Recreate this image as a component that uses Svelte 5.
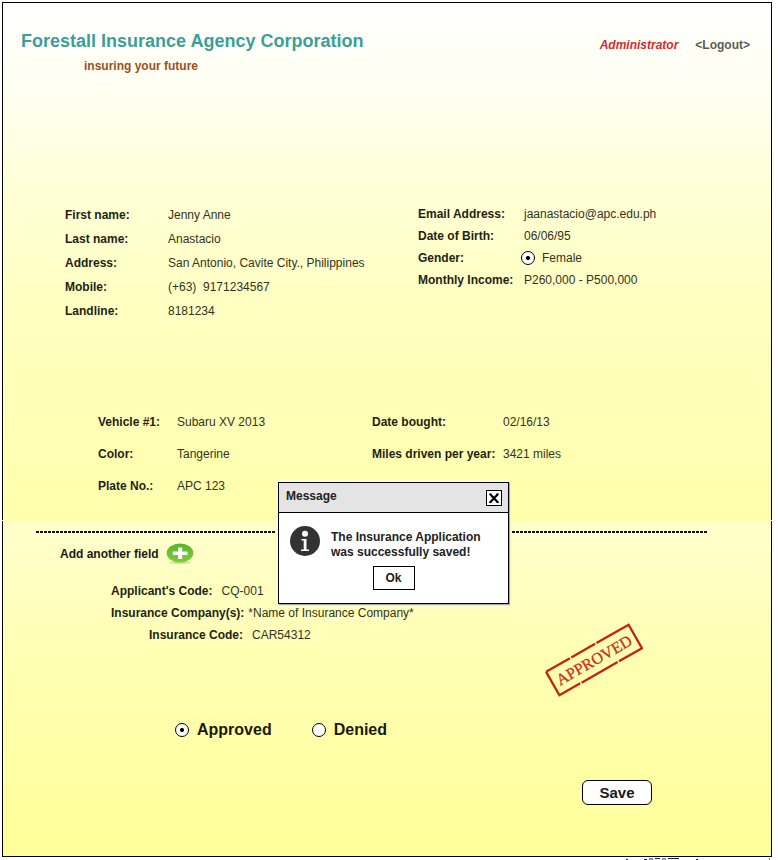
<script>
  let decision = $state('approved');
  let gender = $state('female');
  let open = $state(true);

  const person = [
    ['First name:', 'Jenny Anne'],
    ['Last name:', 'Anastacio'],
    ['Address:', 'San Antonio, Cavite City., Philippines'],
    ['Mobile:', '(+63)\u00a0 9171234567'],
    ['Landline:', '8181234']
  ];
  const vehicle = [
    ['Vehicle #1:', 'Subaru XV 2013'],
    ['Color:', 'Tangerine'],
    ['Plate No.:', 'APC 123']
  ];
  const usage = [
    ['Date bought:', '02/16/13'],
    ['Miles driven per year:', '3421 miles']
  ];
</script>

{#snippet rows(list)}
  {#each list as [name, value]}
    <div class="row"><dt>{name}</dt><dd>{value}</dd></div>
  {/each}
{/snippet}

<main class="frame">
  <section class="details">
    <header>
      <div>
        <h1>Forestall Insurance Agency Corporation</h1>
        <p class="tagline">insuring your future</p>
      </div>
      <nav>
        <span class="role">Administrator</span>
        <a href="#logout">&lt;Logout&gt;</a>
      </nav>
    </header>

    <div class="person">
      <dl>{@render rows(person)}</dl>
      <dl class="contact">
        <div class="row"><dt>Email Address:</dt><dd>jaanastacio@apc.edu.ph</dd></div>
        <div class="row"><dt>Date of Birth:</dt><dd>06/06/95</dd></div>
        <div class="row">
          <dt>Gender:</dt>
          <dd>
            <label class="gender">
              <input type="radio" name="gender" value="female" bind:group={gender} />Female
            </label>
          </dd>
        </div>
        <div class="row"><dt>Monthly Income:</dt><dd>P260,000 - P500,000</dd></div>
      </dl>
    </div>

    <div class="vehicle">
      <dl>{@render rows(vehicle)}</dl>
      <dl class="usage">{@render rows(usage)}</dl>
    </div>
  </section>

  <section class="application">
    <hr />
    <button class="add">
      Add another field
      <svg width="28" height="22" viewBox="0 0 28 22" aria-hidden="true">
        <defs>
          <linearGradient id="leaf" x1="0" y1="0" x2="0" y2="1">
            <stop offset="0" stop-color="#58b32b" />
            <stop offset="1" stop-color="#83cc3c" />
          </linearGradient>
        </defs>
        <ellipse cx="14" cy="19.5" rx="11" ry="1.5" fill="#d0e09c" />
        <ellipse cx="14" cy="10" rx="13.3" ry="9.6" fill="url(#leaf)" />
        <path d="M12.200 4.500h4v4h5.300v3.500h-5.300v4h-4v-4H6.700V8.500h5.500z" fill="#fff" />
      </svg>
    </button>

    <div class="result">
      <dl class="codes">
        <div class="row"><dt>Applicant's Code:</dt><dd>CQ-001</dd></div>
        <div class="row company"><dt>Insurance Company(s):</dt><dd>*Name of Insurance Company*</dd></div>
        <div class="row indent"><dt>Insurance Code:</dt><dd>CAR54312</dd></div>
      </dl>
      <svg class="stamp" width="98" height="74" viewBox="0 0 98 74" role="img" aria-label="Approved stamp">
        <g transform="rotate(-29.7 49 37)" fill="none" stroke="#c8200e">
          <path d="M1.500 23.500H29M30.500 23.500H58M59.500 23.500H96.500V50.500H70M68.500 50.500H27M25.500 50.500H1.500V23.500" stroke-width="2.300" />
          <text x="49" y="42.500" text-anchor="middle" fill="#c8301c" stroke="#c8301c" stroke-width="0.300">APPROVED</text>
        </g>
      </svg>
    </div>

    <div class="decision">
      <label><input type="radio" name="decision" value="approved" bind:group={decision} />Approved</label>
      <label><input type="radio" name="decision" value="denied" bind:group={decision} />Denied</label>
    </div>

    <div class="actions"><button class="save">Save</button></div>
  </section>

  {#if open}
    <div class="dialog" role="dialog" aria-labelledby="message-title">
      <div class="bar">
        <h2 id="message-title">Message</h2>
        <button class="close" aria-label="Close" onclick={() => (open = false)}>
          <svg width="12" height="12" viewBox="0 0 12 12" aria-hidden="true">
            <path d="M2 2L10 10.500M10 2L2 10.500" stroke="#000" stroke-width="2.200" />
            <path d="M1 2h2.500M8.500 2H11M1 10.500h2.500M8.500 10.500H11" stroke="#000" stroke-width="0.800" />
          </svg>
        </button>
      </div>
      <div class="body">
        <svg width="30" height="30" viewBox="0 0 30 30" aria-hidden="true">
          <circle cx="15" cy="15" r="15" fill="#333" />
          <circle cx="15" cy="7.800" r="3" fill="#fff" />
          <path d="M11.500 13h5v10.500h2.500v1.500h-8v-1.500h2.700V14.500h-2.200z" fill="#fff" />
        </svg>
        <p>The Insurance Application<br />was successfully saved!</p>
      </div>
      <button class="ok" onclick={() => (open = false)}>Ok</button>
    </div>
  {/if}
</main>
<svg class="edge" width="146" height="2" viewBox="0 0 146 2" aria-hidden="true">
  <path d="M0 1.500h2M18 1.500h3M23 1h4M29 .5h5M36 1h4M42 .5h11M70 1.500h2M143 1h1" stroke="#222" />
</svg>

<style>
  :global(body) {
    margin: 0;
    background: #fff;
  }
  .frame {
    position: relative;
    box-sizing: border-box;
    margin: 2px 6px 0 2px;
    border: 1px solid #000;
    font: 12px/16px 'Liberation Sans', Arial, sans-serif;
    color: #33331c;
  }
  .edge {
    display: block;
    margin: 1px 6px 0 auto;
  }
  h1, h2, p, dl, dd {
    margin: 0;
  }
  button {
    font: inherit;
    font-weight: bold;
    color: #1a1a14;
    padding: 0;
    cursor: pointer;
  }
  .details {
    padding-bottom: 19px;
    background: linear-gradient(#fff, #fffff2 17%, #ffffd4 38%, #ffffc0 60%, #ffffad);
  }
  header {
    display: flex;
    justify-content: space-between;
    padding: 28px 21px 0 18px;
  }
  h1 {
    font-size: 18px;
    line-height: 20px;
    color: #3a9f99;
  }
  .tagline {
    margin-top: 7px;
    padding-left: 63px;
    font-weight: bold;
    color: #9c4f22;
  }
  nav {
    display: flex;
    gap: 17px;
    margin-top: 6px;
    font-weight: bold;
  }
  .role {
    font-style: italic;
    color: #d92a2a;
  }
  nav a {
    color: #5c5c54;
    text-decoration: none;
  }
  .row {
    display: flex;
    align-items: center;
    white-space: nowrap;
  }
  dt {
    flex: none;
    font-weight: bold;
    color: #1f1f12;
  }
  .person {
    display: grid;
    grid-template-columns: 1fr 1fr;
    margin-top: 129px;
    padding-left: 62px;
  }
  .person .row {
    height: 24px;
  }
  .person dt {
    width: 103px;
  }
  .person .contact .row {
    height: 22px;
  }
  .contact dt {
    width: 106px;
  }
  .vehicle {
    display: grid;
    grid-template-columns: 1fr 1fr;
    margin-top: 83px;
    padding: 0 125px 0 95px;
  }
  .vehicle .row {
    height: 32px;
  }
  .vehicle dt {
    width: 79px;
  }
  .vehicle .usage dt {
    width: 131px;
  }
  input[type='radio'] {
    appearance: none;
    box-sizing: border-box;
    width: 14px;
    height: 14px;
    margin: 0;
    border: 1px solid #000;
    border-radius: 50%;
    background: #fff;
  }
  input[type='radio']:checked {
    background: radial-gradient(circle, #000 0 1.6px, #fff 2.4px);
  }
  label {
    display: flex;
    align-items: center;
  }
  .gender {
    gap: 7px;
    margin-left: -3px;
  }
  .application {
    position: relative;
    padding: 10px 0 51px;
    background: linear-gradient(#ffffcc, #ffffb4 40%, #ffff99);
  }
  .application::before {
    content: '';
    position: absolute;
    top: -1px;
    left: -1px;
    right: -1px;
    height: 1px;
    border: solid #fff;
    border-width: 0 1px;
  }
  hr {
    height: 2px;
    margin: 0 64px 0 33px;
    border: 0;
    background: repeating-linear-gradient(90deg, #111 0 3px, transparent 3px 4px);
  }
  .add {
    display: flex;
    align-items: center;
    gap: 7px;
    margin: 10px 0 0 57px;
    border: 0;
    background: none;
  }
  .result {
    display: flex;
    justify-content: space-between;
    align-items: flex-start;
    margin-top: 15px;
    padding: 0 128px 0 108px;
  }
  .codes .row {
    height: 22px;
    gap: 9px;
  }
  .codes .company {
    gap: 4px;
  }
  .codes .indent {
    padding-left: 38px;
  }
  .stamp {
    margin-top: 43px;
  }
  .stamp text {
    font: 16px 'Liberation Serif', 'Times New Roman', serif;
  }
  .decision {
    display: flex;
    gap: 40px;
    margin: 21px 0 0 172px;
    font-size: 16px;
    line-height: 24px;
    font-weight: bold;
    color: #1a1a0c;
  }
  .decision label {
    gap: 8px;
  }
  .actions {
    display: flex;
    justify-content: flex-end;
    margin-top: 38px;
    padding-right: 119px;
  }
  .save {
    box-sizing: border-box;
    width: 70px;
    height: 25px;
    border: 1px solid #000;
    border-radius: 6px;
    background: #fff;
    font-size: 15px;
  }
  .dialog {
    position: absolute;
    top: 479px;
    left: 50%;
    box-sizing: border-box;
    width: 231px;
    margin-left: -109px;
    padding-bottom: 13px;
    border: 1px solid #000;
    background: #fff;
    box-shadow: 1px 1px 1px #aaa, 0 0 0 3px #ffffc4;
  }
  .bar {
    display: flex;
    justify-content: space-between;
    align-items: center;
    height: 29px;
    padding: 0 6px 0 7px;
    border-bottom: 1px solid #000;
    background: #e4e4e4;
  }
  h2 {
    padding-bottom: 3px;
    font-size: 12px;
    color: #222;
  }
  .close {
    display: grid;
    place-items: center;
    box-sizing: border-box;
    width: 16px;
    height: 16px;
    border: 1px solid #000;
    background: #fff;
  }
  .body {
    display: flex;
    gap: 11px;
    padding: 13px 11px 0;
  }
  .body p {
    padding-top: 4px;
    font-weight: bold;
    line-height: 15px;
    color: #222;
  }
  .ok {
    display: block;
    box-sizing: border-box;
    width: 42px;
    height: 24px;
    margin: 6px auto 0;
    border: 1px solid #000;
    background: #fff;
  }
</style>
